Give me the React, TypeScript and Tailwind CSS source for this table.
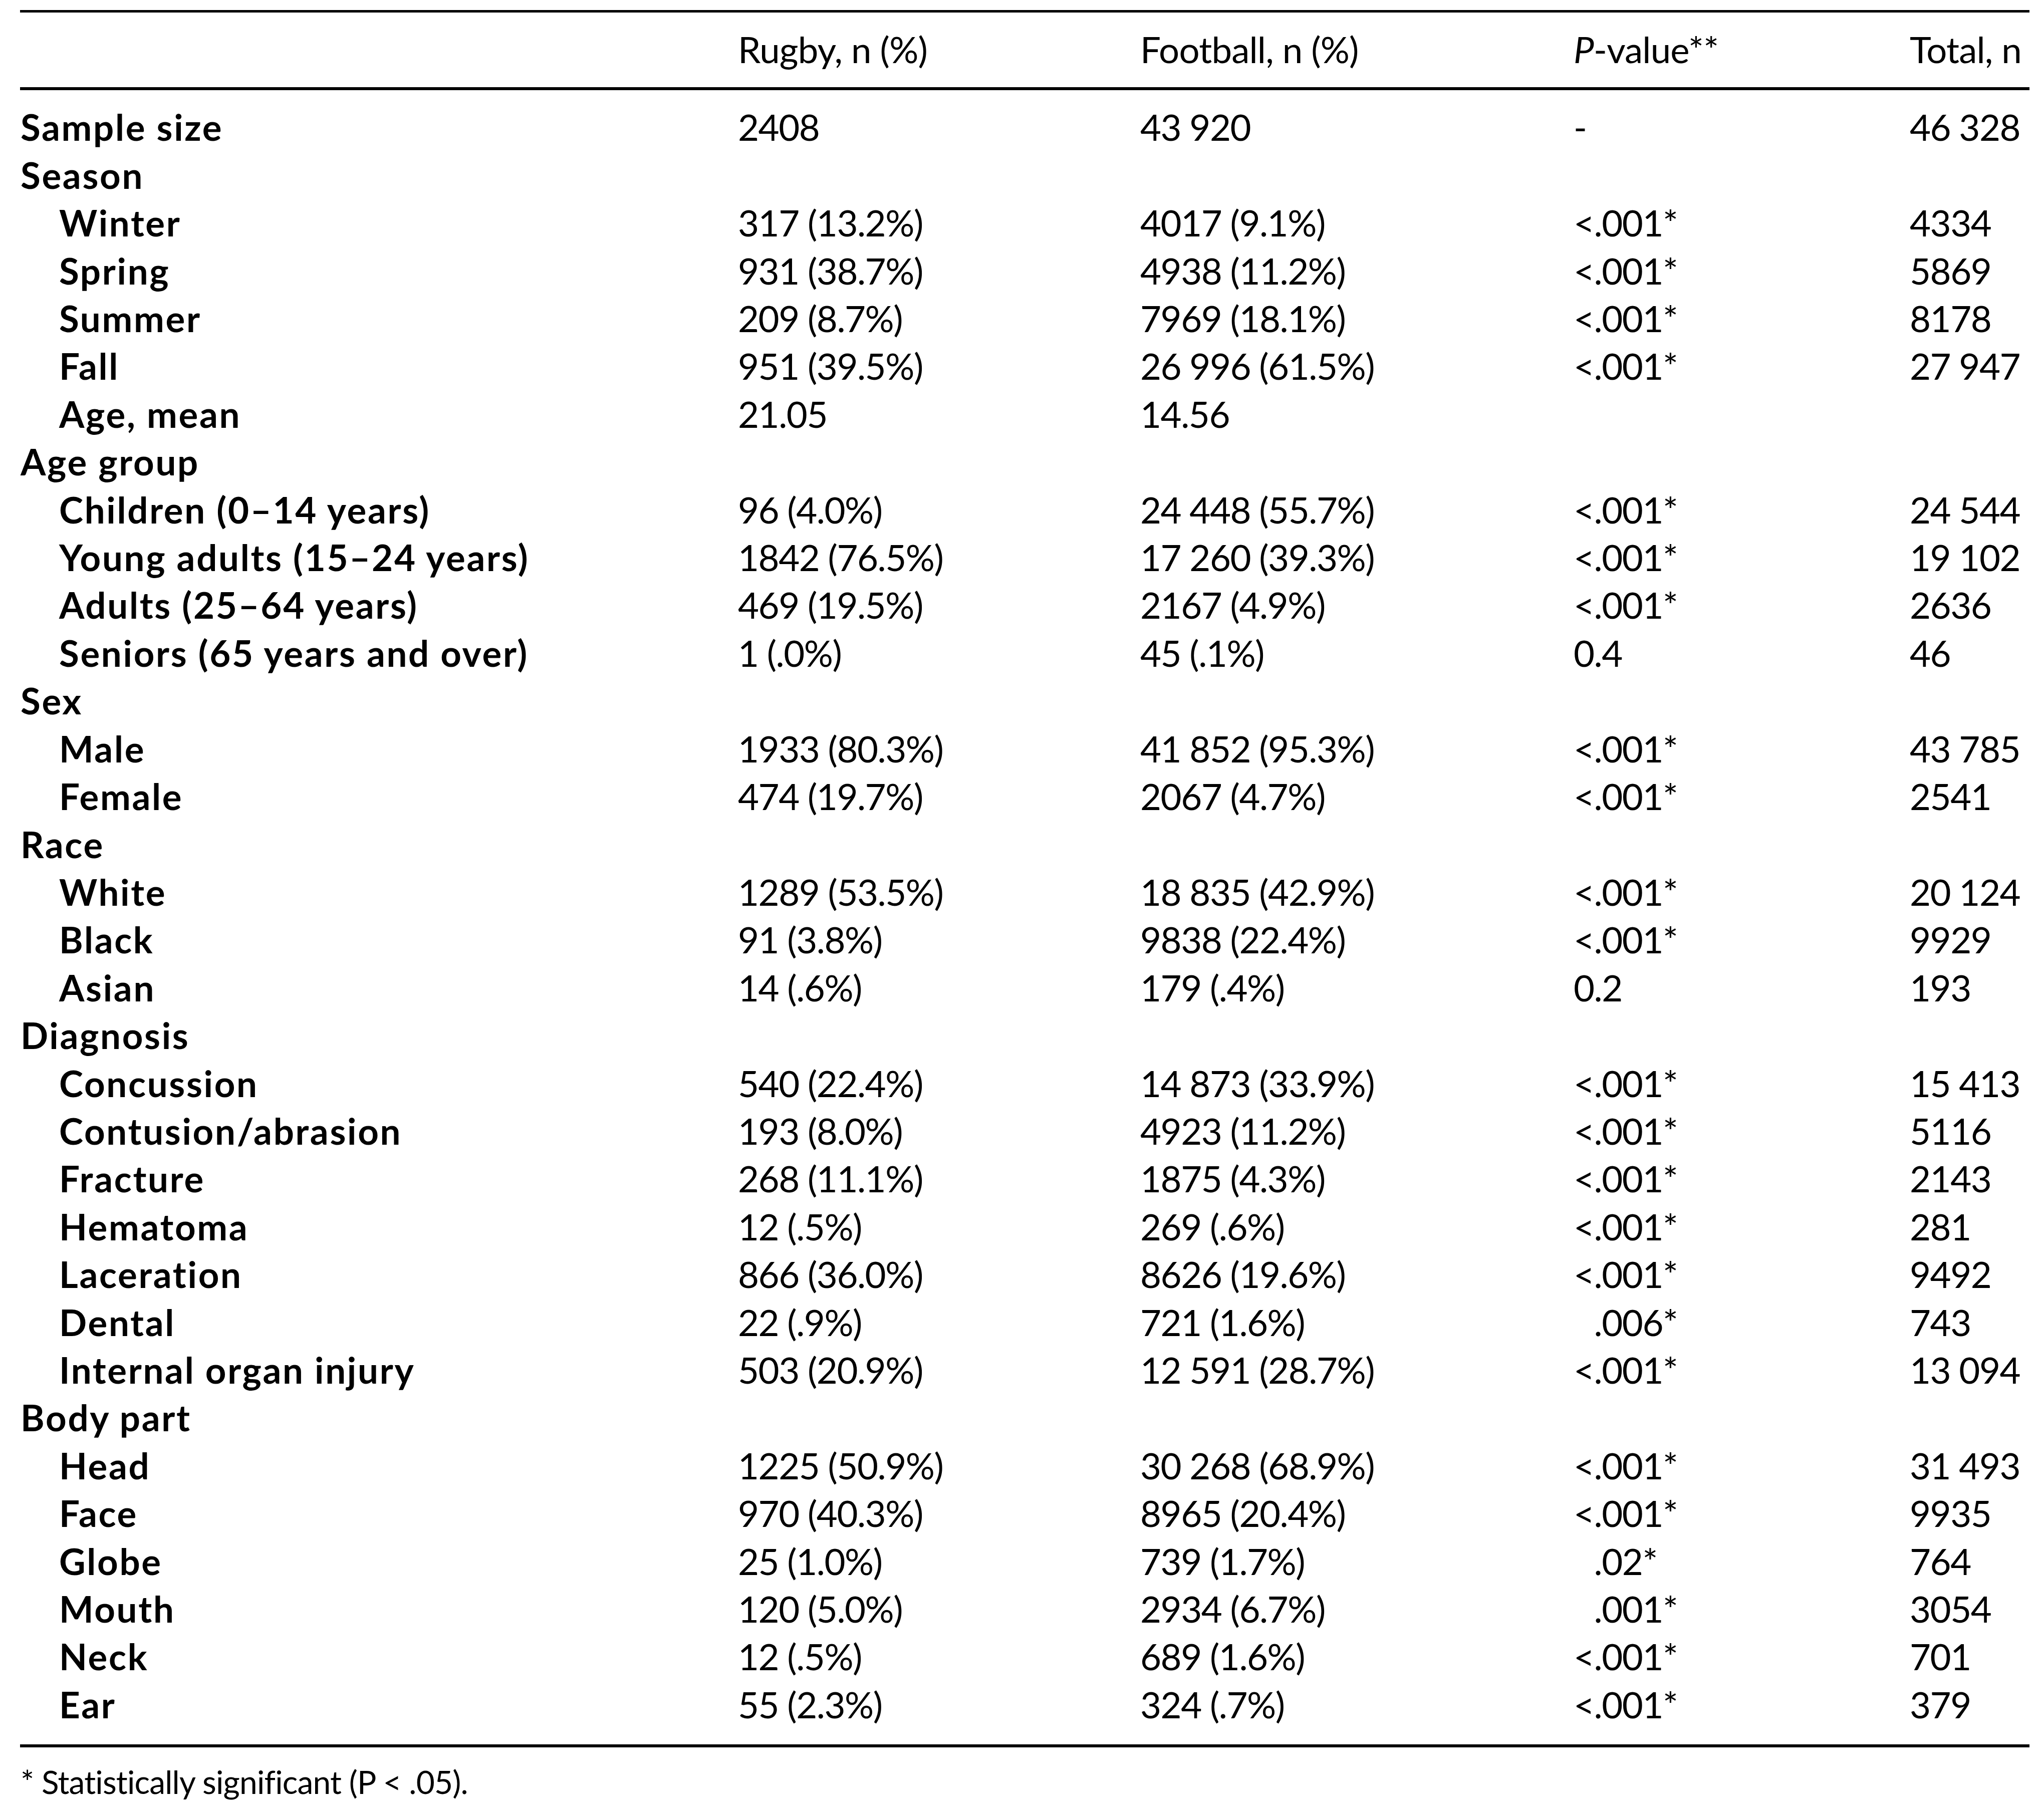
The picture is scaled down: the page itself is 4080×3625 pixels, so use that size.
import React from 'react';

type Row = {
  label: string;
  sub?: boolean;
  rugby?: string;
  football?: string;
  p?: string;
  total?: string;
};

const rows: Row[] = [
  { label: 'Sample size', rugby: '2408', football: '43 920', p: '-', total: '46 328' },
  { label: 'Season' },
  { label: 'Winter', sub: true, rugby: '317 (13.2%)', football: '4017 (9.1%)', p: '<.001*', total: '4334' },
  { label: 'Spring', sub: true, rugby: '931 (38.7%)', football: '4938 (11.2%)', p: '<.001*', total: '5869' },
  { label: 'Summer', sub: true, rugby: '209 (8.7%)', football: '7969 (18.1%)', p: '<.001*', total: '8178' },
  { label: 'Fall', sub: true, rugby: '951 (39.5%)', football: '26 996 (61.5%)', p: '<.001*', total: '27 947' },
  { label: 'Age, mean', sub: true, rugby: '21.05', football: '14.56' },
  { label: 'Age group' },
  { label: 'Children (0–14 years)', sub: true, rugby: '96 (4.0%)', football: '24 448 (55.7%)', p: '<.001*', total: '24 544' },
  { label: 'Young adults (15–24 years)', sub: true, rugby: '1842 (76.5%)', football: '17 260 (39.3%)', p: '<.001*', total: '19 102' },
  { label: 'Adults (25–64 years)', sub: true, rugby: '469 (19.5%)', football: '2167 (4.9%)', p: '<.001*', total: '2636' },
  { label: 'Seniors (65 years and over)', sub: true, rugby: '1 (.0%)', football: '45 (.1%)', p: '0.4', total: '46' },
  { label: 'Sex' },
  { label: 'Male', sub: true, rugby: '1933 (80.3%)', football: '41 852 (95.3%)', p: '<.001*', total: '43 785' },
  { label: 'Female', sub: true, rugby: '474 (19.7%)', football: '2067 (4.7%)', p: '<.001*', total: '2541' },
  { label: 'Race' },
  { label: 'White', sub: true, rugby: '1289 (53.5%)', football: '18 835 (42.9%)', p: '<.001*', total: '20 124' },
  { label: 'Black', sub: true, rugby: '91 (3.8%)', football: '9838 (22.4%)', p: '<.001*', total: '9929' },
  { label: 'Asian', sub: true, rugby: '14 (.6%)', football: '179 (.4%)', p: '0.2', total: '193' },
  { label: 'Diagnosis' },
  { label: 'Concussion', sub: true, rugby: '540 (22.4%)', football: '14 873 (33.9%)', p: '<.001*', total: '15 413' },
  { label: 'Contusion/abrasion', sub: true, rugby: '193 (8.0%)', football: '4923 (11.2%)', p: '<.001*', total: '5116' },
  { label: 'Fracture', sub: true, rugby: '268 (11.1%)', football: '1875 (4.3%)', p: '<.001*', total: '2143' },
  { label: 'Hematoma', sub: true, rugby: '12 (.5%)', football: '269 (.6%)', p: '<.001*', total: '281' },
  { label: 'Laceration', sub: true, rugby: '866 (36.0%)', football: '8626 (19.6%)', p: '<.001*', total: '9492' },
  { label: 'Dental', sub: true, rugby: '22 (.9%)', football: '721 (1.6%)', p: '.006*', total: '743' },
  { label: 'Internal organ injury', sub: true, rugby: '503 (20.9%)', football: '12 591 (28.7%)', p: '<.001*', total: '13 094' },
  { label: 'Body part' },
  { label: 'Head', sub: true, rugby: '1225 (50.9%)', football: '30 268 (68.9%)', p: '<.001*', total: '31 493' },
  { label: 'Face', sub: true, rugby: '970 (40.3%)', football: '8965 (20.4%)', p: '<.001*', total: '9935' },
  { label: 'Globe', sub: true, rugby: '25 (1.0%)', football: '739 (1.7%)', p: '.02*', total: '764' },
  { label: 'Mouth', sub: true, rugby: '120 (5.0%)', football: '2934 (6.7%)', p: '.001*', total: '3054' },
  { label: 'Neck', sub: true, rugby: '12 (.5%)', football: '689 (1.6%)', p: '<.001*', total: '701' },
  { label: 'Ear', sub: true, rugby: '55 (2.3%)', football: '324 (.7%)', p: '<.001*', total: '379' },
];

const cols = 'grid grid-cols-[1433px_803px_865px_671px_239px]';

// p-values line up on the decimal point, so pad the ones without "<"
const PValue = ({ value }: { value?: string }) => {
  if (!value) return null;
  if (value.startsWith('.')) {
    return (
      <>
        <span className="invisible">&lt;</span>
        {value}
      </>
    );
  }
  return <>{value}</>;
};

export default function App() {
  return (
    <div className="w-[4080px] h-[3625px] bg-white text-black font-['Lato',sans-serif] pt-[20px]">
      <div className="ml-[40px] w-[4011px]">
        {/* Header */}
        <div className={`${cols} border-t-[5px] border-b-[6px] border-black pt-[25px] pb-[29px] text-[72.6px] leading-[95.4px] tracking-[-0.8px] whitespace-nowrap`}>
          <div />
          <div>Rugby, n (%)</div>
          <div>Football, n (%)</div>
          <div>
            <span className="italic">P</span>-value**
          </div>
          <div>Total, n</div>
        </div>

        {/* Body */}
        <div className="border-b-[6px] border-black pt-[25px] pb-[33px] text-[72.6px] leading-[95.4px] tracking-[-1.5px] whitespace-nowrap">
          {rows.map((row) => (
            <div key={row.label} className={cols}>
              <div className={`font-bold tracking-[2.7px] ${row.sub ? 'pl-[78px]' : 'pl-[1px]'}`}>{row.label}</div>
              <div>{row.rugby}</div>
              <div>{row.football}</div>
              <div>
                <PValue value={row.p} />
              </div>
              <div>{row.total}</div>
            </div>
          ))}
        </div>
      </div>

      <p className="ml-[41px] mt-[37px] text-[64px] leading-[64px] tracking-[-0.8px] whitespace-nowrap">
        * Statistically significant (P &lt; .05).
      </p>
    </div>
  );
}
